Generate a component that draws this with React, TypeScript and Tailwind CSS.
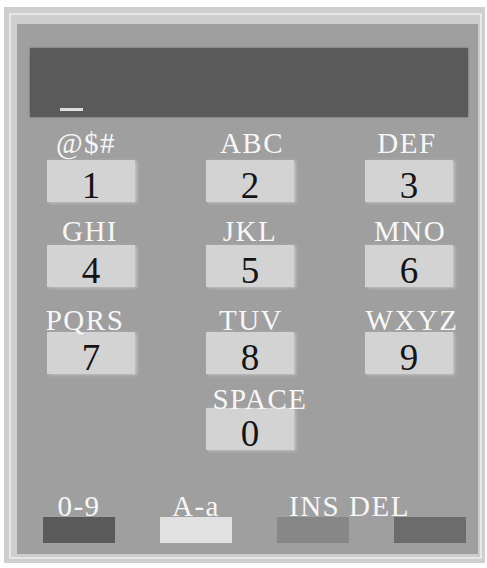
import React from "react";

const serif = "font-['Liberation_Serif','Times_New_Roman',serif]";

type Row = {
  labels: string[];
  shifts: string[];
  digits: string[];
  labelMt: string;
  keyMt: string;
};

const rows: Row[] = [
  {
    labels: ["@$#", "ABC", "DEF"],
    shifts: ["translate-x-[-5px]", "translate-x-[2px]", "translate-x-[-2px]"],
    digits: ["1", "2", "3"],
    labelMt: "mt-[12px]",
    keyMt: "mt-[2px]",
  },
  {
    labels: ["GHI", "JKL", "MNO"],
    shifts: ["translate-x-[-1px]", "translate-x-[0px]", "translate-x-[1px]"],
    digits: ["4", "5", "6"],
    labelMt: "mt-[15px]",
    keyMt: "mt-[-1px]",
  },
  {
    labels: ["PQRS", "TUV", "WXYZ"],
    shifts: ["translate-x-[-6px]", "translate-x-[1px]", "translate-x-[3px]"],
    digits: ["7", "8", "9"],
    labelMt: "mt-[19px]",
    keyMt: "mt-[-3px]",
  },
  {
    labels: ["", "SPACE", ""],
    shifts: ["", "translate-x-[10px]", ""],
    digits: ["", "0", ""],
    labelMt: "mt-[11px]",
    keyMt: "mt-[-6px]",
  },
];

function KeyRow({ row }: { row: Row }) {
  return (
    <div className="flex flex-col">
      <div className={`grid grid-cols-[88px_88px_88px] gap-x-[71px] ${row.labelMt}`}>
        {row.labels.map((l, i) => (
          <div
            key={i}
            className={`h-[29px] leading-[29px] text-[29px] tracking-[1.5px] text-center whitespace-nowrap text-[#f7f7f7] ${serif} flex justify-center`}
          >
            <span className={row.shifts[i]}>{l}</span>
          </div>
        ))}
      </div>
      <div className={`grid grid-cols-[88px_88px_88px] gap-x-[71px] ${row.keyMt}`}>
        {row.digits.map((d, i) =>
          d ? (
            <div
              key={i}
              className={`h-[42px] bg-[#d3d3d3] shadow-[2px_1px_3px_rgba(220,220,220,0.6)] text-center text-[37px] leading-[51px] text-[#141414] ${serif}`}
            >
              {d}
            </div>
          ) : (
            <div key={i} />
          )
        )}
      </div>
    </div>
  );
}

export default function App() {
  return (
    <div className="min-h-screen bg-white pl-[4px] pt-[7px]">
      <div className="w-[481px] h-[556px] bg-[#cecece] pl-[5px] pt-[6px] pr-[3px] pb-[4px] box-border">
        <div className="w-full h-full border-2 border-[#e6e6e6] pl-[6px] pt-[9px] pr-[2px] pb-[3px] box-border">
          <div className="w-[461px] h-[530px] bg-[#9f9f9f] flex flex-col">
            {/* display */}
            <div className="ml-[13px] mt-[24px] w-[438px] h-[69px] bg-[#5a5a5a] shadow-[0_0_2px_rgba(60,60,60,0.6)] flex items-end pl-[30px] pb-[6px]">
              <div className="w-[23px] h-[3px] bg-[#dedede]" />
            </div>

            {/* keypad */}
            <div className="ml-[30px] flex flex-col">
              {rows.map((r, i) => (
                <KeyRow key={i} row={r} />
              ))}
            </div>

            {/* bottom mode buttons */}
            <div className="ml-[26px] flex flex-col mt-[42px]">
              <div className={`grid grid-cols-[72px_72px_72px_72px] gap-x-[45px] h-[29px] text-[29px] leading-[29px] tracking-[1.5px] text-[#f7f7f7] ${serif}`}>
                <div className="text-center whitespace-nowrap">0-9</div>
                <div className="text-center whitespace-nowrap">A-a</div>
                <div className="pl-[12px] whitespace-nowrap">INS DEL</div>
                <div />
              </div>
              <div className="grid grid-cols-[72px_72px_72px_72px] gap-x-[45px] mt-[-4px]">
                <div className="h-[26px] bg-[#5a5a5a]" />
                <div className="h-[26px] bg-[#e1e1e1]" />
                <div className="h-[26px] bg-[#878787]" />
                <div className="h-[26px] bg-[#6c6c6c]" />
              </div>
            </div>
          </div>
        </div>
      </div>
    </div>
  );
}
